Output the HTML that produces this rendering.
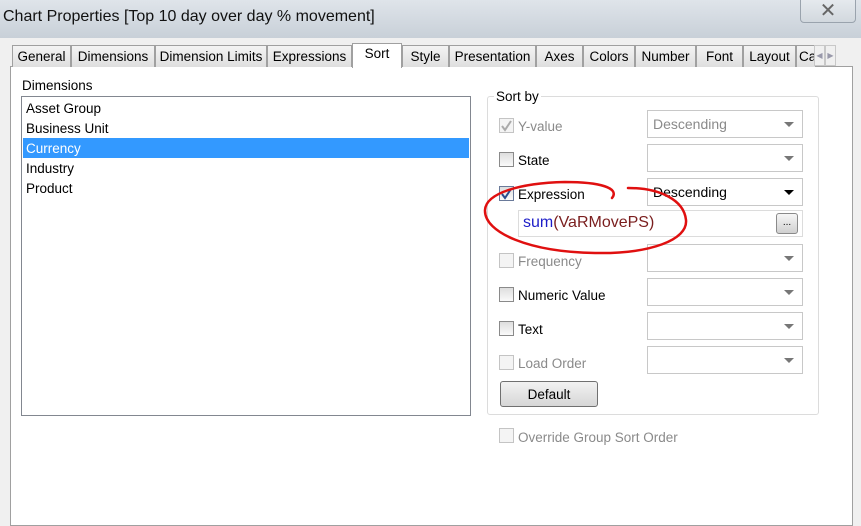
<!DOCTYPE html><html><head><style>
*{margin:0;padding:0;box-sizing:border-box}
body{width:861px;height:513px;overflow:hidden;background:#f0f0f0;font-family:"Liberation Sans",sans-serif;font-size:13px;color:#000;position:relative}
.a{position:absolute}
.title{left:0;top:0;width:861px;height:38px;background:linear-gradient(#dfe4ea,#c8d0d8);}
.tab{position:absolute;top:45px;height:22px;border:1px solid #a0a0a0;border-bottom:none;background:linear-gradient(#f4f4f4,#dedede);text-align:center;line-height:21px;font-size:13.5px}
.cb{position:absolute;width:15px;height:15px;border:1px solid #8a8a8a;background:linear-gradient(#dedede,#fafafa)}
.cb.d{border-color:#c4c4c4;background:#f4f4f4}
.lbl{position:absolute;font-size:13.5px}
.g{color:#8a8a8a}
.dd{position:absolute;left:647px;width:156px;height:28px;border:1px solid #c8c8c8;background:#fff;font-size:14px;line-height:27px;padding-left:5px}
.dd:after{content:"";position:absolute;right:8px;top:11px;border:5px solid transparent;border-top:5px solid #777;border-bottom:none}
.dd.k:after{border-top-color:#000}
</style></head><body>
<div class="a title"></div>
<div class="a" style="left:3px;top:8px;font-size:16px;color:#111">Chart Properties [Top 10 day over day % movement]</div>
<div class="a" style="left:800px;top:-4px;width:56px;height:27px;border:1px solid #9aa3ad;border-radius:4px;background:linear-gradient(#e8ecf0,#d2d8de);text-align:center;color:#666;font-size:20px;line-height:28px">✕</div>
<div class="a" style="left:10px;top:66px;width:843px;height:460px;background:#fff;border:1px solid #a0a0a0"></div>
<div class="tab" style="left:12px;width:59px">General</div>
<div class="tab" style="left:71px;width:84px">Dimensions</div>
<div class="tab" style="left:155px;width:112px">Dimension Limits</div>
<div class="tab" style="left:267px;width:85px">Expressions</div>
<div class="tab" style="left:352px;top:43px;height:25px;width:50px;background:#fff;line-height:20px">Sort</div>
<div class="tab" style="left:402px;width:47px">Style</div>
<div class="tab" style="left:449px;width:87px">Presentation</div>
<div class="tab" style="left:536px;width:47px">Axes</div>
<div class="tab" style="left:583px;width:52px">Colors</div>
<div class="tab" style="left:635px;width:61px">Number</div>
<div class="tab" style="left:696px;width:47px">Font</div>
<div class="tab" style="left:743px;width:53px">Layout</div>
<div class="tab" style="left:796px;width:20px;text-align:left;padding-left:2px;overflow:hidden">Ca</div>
<div class="tab" style="left:814px;width:11px;top:45px;height:21px;border:1px solid #c8c8c8;background:#f0f0f0;font-size:8px;color:#99a;line-height:19px">◀</div>
<div class="tab" style="left:825px;width:11px;top:45px;height:21px;border:1px solid #c8c8c8;background:#f0f0f0;font-size:8px;color:#99a;line-height:19px">▶</div>
<div class="lbl" style="left:22px;top:78px">Dimensions</div>
<div class="a" style="left:21px;top:96px;width:450px;height:320px;border:1px solid #828790;background:#fff"></div>
<div class="lbl" style="left:26px;top:101px">Asset Group</div>
<div class="lbl" style="left:26px;top:121px">Business Unit</div>
<div class="a" style="left:23px;top:138px;width:446px;height:20px;background:#3399ff"></div>
<div class="lbl" style="left:26px;top:141px;color:#fff">Currency</div>
<div class="lbl" style="left:26px;top:161px">Industry</div>
<div class="lbl" style="left:26px;top:181px">Product</div>
<div class="a" style="left:487px;top:96px;width:332px;height:319px;border:1px solid #dcdcdc;border-radius:3px"></div>
<div class="lbl" style="left:494px;top:89px;background:#fff;padding:0 2px">Sort by</div>
<div class="cb d" style="left:499px;top:118px"></div>
<div class="lbl g" style="left:518px;top:119px">Y-value</div>
<div class="dd g" style="top:110px">Descending</div>
<div class="cb" style="left:499px;top:152px"></div><div class="lbl" style="left:518px;top:153px">State</div>
<div class="dd" style="top:144px"></div>
<div class="cb" style="left:499px;top:186px;border-color:#6a7a9a"></div>
<div class="lbl" style="left:518px;top:187px">Expression</div>
<div class="dd k" style="top:178px">Descending</div>
<div class="a" style="left:518px;top:210px;width:285px;height:27px;border:1px solid #dcdcdc;background:#fff;font-size:16px;line-height:24px;padding-left:4px"><span style="color:#1d1dc8">sum</span><span style="color:#7a1e1e">(VaRMovePS)</span></div>
<div class="a" style="left:776px;top:213px;width:22px;height:21px;border:1px solid #8a8a8a;border-radius:3px;background:linear-gradient(#f6f6f6,#d0d0d0);font-size:10px;text-align:center;line-height:17px">...</div>
<div class="cb d" style="left:499px;top:253px"></div><div class="lbl g" style="left:518px;top:254px">Frequency</div>
<div class="dd" style="top:244px"></div>
<div class="cb" style="left:499px;top:287px"></div><div class="lbl" style="left:518px;top:288px">Numeric Value</div>
<div class="dd" style="top:278px"></div>
<div class="cb" style="left:499px;top:321px"></div><div class="lbl" style="left:518px;top:322px">Text</div>
<div class="dd" style="top:312px"></div>
<div class="cb d" style="left:499px;top:355px"></div><div class="lbl g" style="left:518px;top:356px">Load Order</div>
<div class="dd" style="top:346px"></div>
<div class="a" style="left:500px;top:381px;width:98px;height:26px;border:1px solid #707070;border-radius:3px;background:linear-gradient(#f2f2f2,#d6d6d6);text-align:center;line-height:25px;font-size:13.5px">Default</div>
<div class="cb d" style="left:499px;top:428px"></div><div class="lbl g" style="left:518px;top:430px">Override Group Sort Order</div>
<svg class="a" style="left:0;top:0" width="861" height="513">
<path d="M502 126 L505 130 L511 121" fill="none" stroke="#aaa" stroke-width="2"/>
<path d="M502 194 L505 198 L511 189" fill="none" stroke="#2a4b8c" stroke-width="2"/>
<path d="M612 198 C620 188 600 182 565 182 C520 183 486 193 485 210 C484 233 530 252 595 253 C650 254 688 240 686 220 C684 200 660 188 628 188" fill="none" stroke="#e01010" stroke-width="2.5" stroke-linecap="round"/></svg>
</body></html>
